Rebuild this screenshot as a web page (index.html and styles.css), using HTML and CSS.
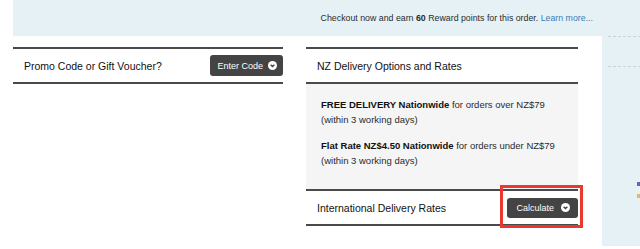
FILE: index.html
```html
<!DOCTYPE html>
<html lang="en">
<head>
    <meta charset="UTF-8">
    <meta name="viewport" content="width=device-width, initial-scale=1.0">
    <title>Cart - Delivery Options</title>
    <link rel="stylesheet" href="styles.css">
</head>
<body>
    <div class="reward-banner">
        <p>Checkout now and earn <b>60</b> Reward points for this order. <a href="#">Learn more...</a></p>
    </div>

    <div class="page">
        <div class="cart-extras">
            <div class="col col-left">
                <div class="row">
                    <span class="row-title">Promo Code or Gift Voucher?</span>
                    <button class="dark-btn">Enter Code
                        <svg width="9" height="9" viewBox="0 0 9 9"><circle cx="4.5" cy="4.5" r="4.5" fill="#fff"/><polyline points="2.6,3.7 4.5,5.5 6.4,3.7" fill="none" stroke="#444" stroke-width="1.4"/></svg>
                    </button>
                </div>
            </div>

            <div class="col col-right">
                <div class="row">
                    <span class="row-title">NZ Delivery Options and Rates</span>
                </div>
                <div class="delivery-info">
                    <p><b>FREE DELIVERY Nationwide</b> for orders over NZ$79<br>(within 3 working days)</p>
                    <p><b>Flat Rate NZ$4.50 Nationwide</b> for orders under NZ$79<br>(within 3 working days)</p>
                </div>
                <div class="row">
                    <span class="row-title">International Delivery Rates</span>
                    <button class="dark-btn calc-btn">Calculate
                        <svg width="9" height="9" viewBox="0 0 9 9"><circle cx="4.5" cy="4.5" r="4.5" fill="#fff"/><polyline points="2.6,3.7 4.5,5.5 6.4,3.7" fill="none" stroke="#444" stroke-width="1.4"/></svg>
                    </button>
                </div>
            </div>
        </div>

        <div class="sidebar">
            <div class="dash"></div>
            <div class="dash dash-second"></div>
            <div class="swatch swatch-blue"></div>
            <div class="swatch swatch-orange"></div>
        </div>
    </div>
</body>
</html>
```

FILE: styles.css
```css
body {
    margin: 0;
    font-family: "Liberation Sans", Arial, sans-serif;
    background-color: #fff;
    color: #333;
}
.reward-banner {
    margin-left: 13px;
    height: 36px;
    background-color: #e6f1f6;
    display: flex;
    justify-content: flex-end;
    align-items: center;
    padding-right: 47px;
}
.reward-banner p {
    margin: 0;
    font-size: 8.8px;
    color: #2b2b2b;
}
.reward-banner a {
    color: #3a7db3;
    text-decoration: none;
}
.page {
    display: flex;
    height: 210px;
}
.cart-extras {
    margin-left: 13px;
    width: 565px;
    padding: 11px 24px 0 0;
    display: flex;
    align-items: flex-start;
    gap: 23px;
}
.col-left {
    width: 270px;
}
.col-right {
    width: 272px;
}
.row {
    height: 33px;
    border-top: 2px solid #4a4a4a;
    border-bottom: 2px solid #4a4a4a;
    display: flex;
    align-items: center;
    justify-content: space-between;
    padding: 0 0 0 11px;
}
.row-title {
    font-size: 10.5px;
    color: #111;
}
.dark-btn {
    height: 21px;
    display: flex;
    align-items: center;
    gap: 5px;
    padding: 0 6px 0 7px;
    background-color: #444;
    color: #fff;
    border: none;
    border-radius: 3px;
    font-family: inherit;
    font-size: 9px;
    cursor: pointer;
}
.delivery-info {
    background-color: #f5f5f5;
    padding: 13px 10px 21px 15px;
}
.delivery-info p {
    margin: 0;
    font-size: 9.5px;
    line-height: 15px;
    color: #2b2b2b;
}
.delivery-info p + p {
    margin-top: 11px;
}
.delivery-info b {
    color: #111;
}
.calc-btn {
    position: relative;
    height: 20px;
    gap: 7px;
    padding: 0 8px 0 9px;
}
.calc-btn::after {
    content: "";
    position: absolute;
    top: -13px;
    left: -7px;
    right: -5px;
    bottom: -10px;
    border: 3px solid #e8392e;
}
.sidebar {
    flex: 1;
    height: 210px;
    background-color: #e6f1f6;
    padding-left: 6px;
}
.dash {
    border-top: 1px dashed #c7d3d9;
}
.dash-second {
    margin-top: 29px;
}
.swatch {
    width: 4px;
    height: 4px;
    margin-left: 29px;
}
.swatch-blue {
    margin-top: 115px;
    background-color: #5b68c0;
}
.swatch-orange {
    margin-top: 8px;
    background-color: #e9b266;
}
```
